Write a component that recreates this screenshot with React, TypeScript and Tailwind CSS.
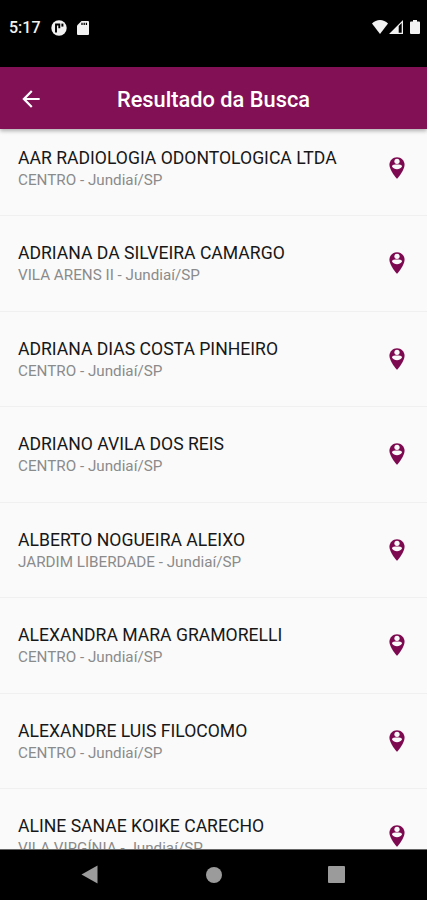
import React from 'react'
import { MdArrowBack } from 'react-icons/md'

interface Provider {
    name: string
    location: string
}

const PROVIDERS: Provider[] = [
    { name: 'AAR RADIOLOGIA ODONTOLOGICA LTDA', location: 'CENTRO - Jundiaí/SP' },
    { name: 'ADRIANA DA SILVEIRA CAMARGO', location: 'VILA ARENS II - Jundiaí/SP' },
    { name: 'ADRIANA DIAS COSTA PINHEIRO', location: 'CENTRO - Jundiaí/SP' },
    { name: 'ADRIANO AVILA DOS REIS', location: 'CENTRO - Jundiaí/SP' },
    { name: 'ALBERTO NOGUEIRA ALEIXO', location: 'JARDIM LIBERDADE - Jundiaí/SP' },
    { name: 'ALEXANDRA MARA GRAMORELLI', location: 'CENTRO - Jundiaí/SP' },
    { name: 'ALEXANDRE LUIS FILOCOMO', location: 'CENTRO - Jundiaí/SP' },
    { name: 'ALINE SANAE KOIKE CARECHO', location: 'VILA VIRGÍNIA - Jundiaí/SP' },
]

function StatusBar() {
    return (
        <div className="flex h-[67px] shrink-0 items-start justify-between bg-black pt-[18px] pr-[7px] pl-[9px] text-[#f2f2f2]">
            <div className="flex h-[19px] items-center">
                <span className="w-[42px] text-[16px] leading-[19px] font-medium">5:17</span>
                <svg className="h-4 w-4" viewBox="0 0 16 16">
                    <circle cx="8" cy="8" r="7.7" fill="currentColor" />
                    <path d="M5 12.4V4.2M4.1 4.5H8.3V8.3" fill="none" stroke="#000" strokeWidth="1.9" />
                    <path d="M10.4 3.6h2v3h-2z" fill="#000" />
                </svg>
                <svg className="ml-[10px] h-[14px] w-3" viewBox="0 0 12 14">
                    <path d="M4.5 0H11a1 1 0 0 1 1 1v12a1 1 0 0 1-1 1H1a1 1 0 0 1-1-1V4.5z" fill="currentColor" />
                    <path d="M5 1.8v2.2M7.2 1.8v2.2M9.4 1.8v2.2" stroke="#000" strokeWidth="1.3" />
                </svg>
            </div>
            <div className="flex h-[18px] items-center">
                <svg className="h-[14px] w-4" viewBox="0 0 16 14">
                    <path d="M0 3.6C2.2 1.2 5 0 8 0s5.8 1.2 8 3.6L8 14z" fill="currentColor" />
                </svg>
                <svg className="ml-[1px] h-[14px] w-[14px]" viewBox="0 0 14 14">
                    <path d="M0 14L14 0v14zM9.7 6.1V12.7H12.7V3.1z" fill="currentColor" fillRule="evenodd" />
                </svg>
                <svg className="ml-[7px] h-[14px] w-[10px]" viewBox="0 0 10 14">
                    <path d="M3 0h4v1.4h2a1 1 0 0 1 1 1V13a1 1 0 0 1-1 1H1a1 1 0 0 1-1-1V2.4a1 1 0 0 1 1-1h2z" fill="currentColor" />
                </svg>
            </div>
        </div>
    )
}

function AppHeader() {
    return (
        <header className="z-10 grid h-[62px] shrink-0 grid-cols-[62px_1fr_62px] items-center bg-[#821055] text-white shadow-[0_2px_4px_rgba(0,0,0,0.3)]">
            <button className="flex justify-center pt-[1px]" aria-label="Voltar">
                <MdArrowBack size={26} />
            </button>
            <h1 className="pt-[3px] text-center text-[21.8px] leading-7 font-medium whitespace-nowrap">Resultado da Busca</h1>
        </header>
    )
}

// Map pin with a person cut out of its head
function PersonPin() {
    return (
        <svg className="mt-[8px] h-[26px] w-[26px] text-[#7d0a50]" viewBox="0 0 24 24">
            <path
                d="M12 2C8.14 2 5 5.14 5 9c0 5.25 7 13 7 13s7-7.75 7-13c0-3.86-3.14-7-7-7z"
                fill="currentColor"
            />
            <circle cx="12" cy="5.8" r="2.4" fill="#fafafa" />
            <path
                d="M7.5 10.9V10.2C7.5 9 9.6 8.8 12 8.8s4.5.2 4.5 1.4v.7c-.9 1.5-2.6 2.3-4.5 2.3s-3.6-.8-4.5-2.3z"
                fill="#fafafa"
            />
        </svg>
    )
}

function ProviderRow({ name, location }: Provider) {
    return (
        <li className="flex h-[95.5px] shrink-0 items-start justify-between border-b border-[#f0f0f0] pt-[26px] pr-[17px] pl-[18px]">
            <div className="-mt-[1px] whitespace-nowrap">
                <p className="text-[17.6px] leading-[24px] text-[#171717]">{name}</p>
                <p className="-mt-[1px] text-[15.23px] leading-[22px] text-[#8b8b8b]">{location}</p>
            </div>
            <PersonPin />
        </li>
    )
}

function NavigationBar() {
    return (
        <nav className="z-10 flex h-[51px] shrink-0 items-center justify-between border-t border-[#666666] bg-black pr-[82px] pb-[1px] pl-[81px] text-[#9b9b9b]">
            <svg className="h-[19px] w-[17px]" viewBox="0 0 17 19">
                <path d="M0.5 9.5L16.5 0.5v18z" fill="currentColor" />
            </svg>
            <span className="ml-[1px] h-4 w-4 rounded-full bg-[#9b9b9b]" />
            <span className="h-[17px] w-[17px] rounded-[1px] bg-[#9b9b9b]" />
        </nav>
    )
}

export default function App() {
    return (
        <div className="flex h-[900px] w-[427px] flex-col overflow-hidden bg-[#fafafa] font-[Roboto,sans-serif]">
            <StatusBar />
            <AppHeader />
            <main className="min-h-0 flex-1 overflow-hidden">
                <ul className="-mt-[8.2px] flex flex-col">
                    {PROVIDERS.map((provider) => (
                        <ProviderRow key={provider.name} {...provider} />
                    ))}
                </ul>
            </main>
            <NavigationBar />
        </div>
    )
}
